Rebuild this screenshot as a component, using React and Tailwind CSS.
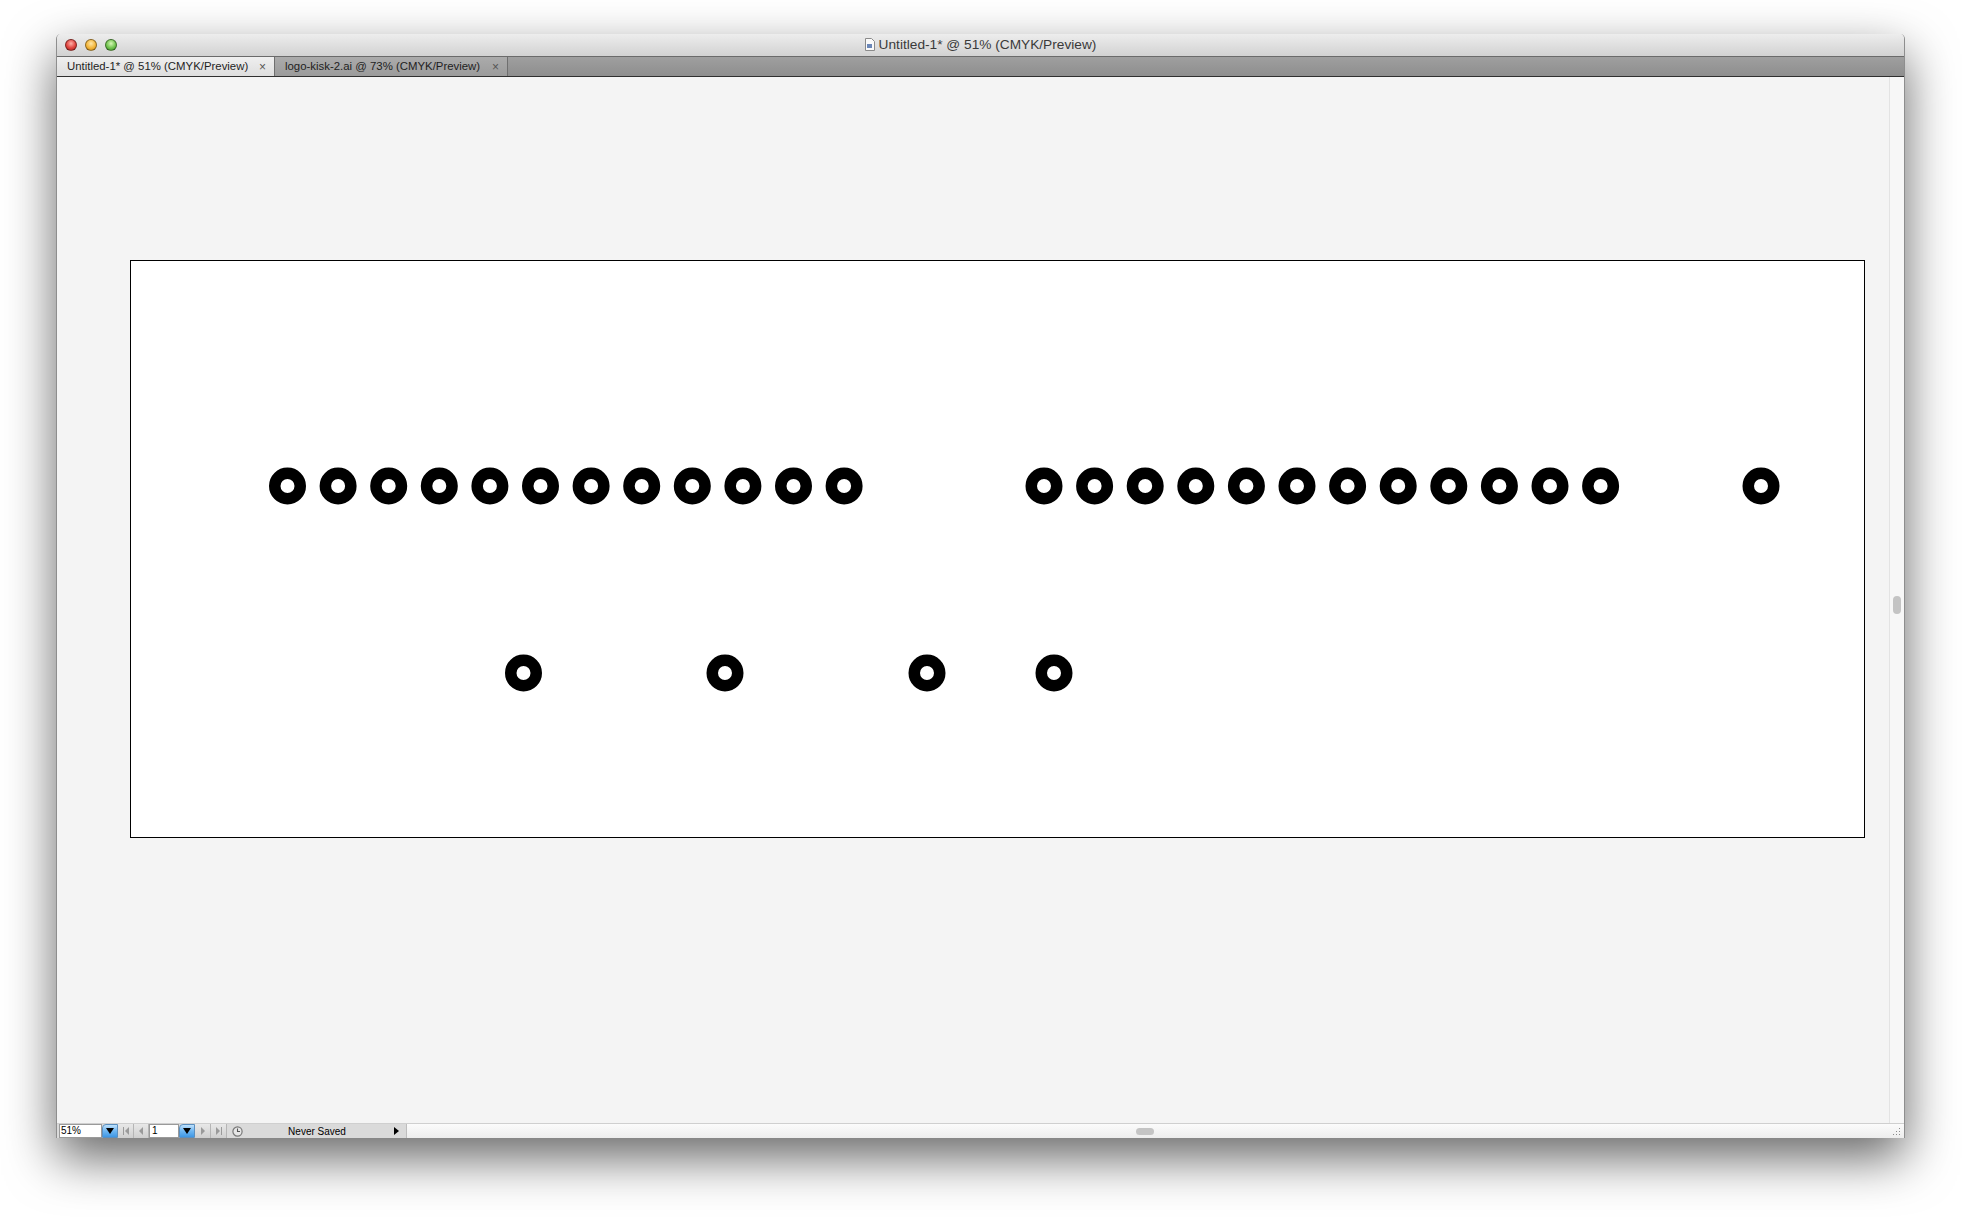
import React from 'react';

const SANS = { fontFamily: '"Liberation Sans", "DejaVu Sans", Arial, sans-serif' };

// dot centres, in artboard coordinates
const topRow = [
  ...Array.from({ length: 12 }, (_, i) => 156.5 + i * 50.6),
  ...Array.from({ length: 12 }, (_, i) => 913 + i * 50.6),
  1630,
];
const bottomRow = [392.5, 594, 796, 923];

const Ring = ({ cx, cy }) => (
  <circle cx={cx} cy={cy} r="12.75" fill="#fff" stroke="#000" strokeWidth="11.5" />
);

const Light = ({ className }) => (
  <div className={`w-[12px] h-[12px] rounded-full border border-black/40 ${className}`} />
);

const Tab = ({ label, active }) => (
  <div
    className={`flex items-center h-full pl-[10px] pr-[8px] border-r border-[#6f6f6f] ${
      active ? 'bg-gradient-to-b from-[#efefef] to-[#dedede] w-[218px]' : 'bg-gradient-to-b from-[#ababab] to-[#9b9b9b] w-[233px]'
    }`}
  >
    <span className="text-[11.4px] text-[#1e1e1e] whitespace-nowrap flex-1">{label}</span>
    <span className="text-[12px] text-[#555] leading-none">×</span>
  </div>
);

const BlueDrop = () => (
  <div className="w-[16px] h-full flex items-center justify-center rounded-tl-[4px] bg-gradient-to-b from-[#bfe1fb] via-[#6db6f2] to-[#3e97e4] border border-[#5b8fbf]">
    <svg width="8" height="6" viewBox="0 0 8 6"><path d="M0 0h8L4 6z" fill="#000" /></svg>
  </div>
);

const NavBtn = ({ children, w = 'w-[16px]' }) => (
  <div className={`${w} h-full flex items-center justify-center bg-gradient-to-b from-[#e8e8e8] to-[#cfcfcf] border-r border-[#b5b5b5]`}>
    {children}
  </div>
);

const StatusBar = () => (
  <div className="h-[15px] flex border-t border-[#cfcfcf] bg-gradient-to-b from-[#fbfbfb] to-[#ededed]">
    <div className="flex h-full pl-[2px] bg-[#dadada] w-[350px] shrink-0">
      <div className="w-[43px] h-full bg-white border border-[#9a9a9a] text-[10px] leading-[12px] pl-[1px] text-black">51%</div>
      <BlueDrop />
      <NavBtn>
        <svg width="8" height="8" viewBox="0 0 8 8"><path d="M1 0h1v8H1zM7 0v8L3 4z" fill="#9a9a9a" /></svg>
      </NavBtn>
      <NavBtn w="w-[15px]">
        <svg width="6" height="8" viewBox="0 0 6 8"><path d="M5 0v8L1 4z" fill="#9a9a9a" /></svg>
      </NavBtn>
      <div className="w-[30px] h-full bg-white border border-[#9a9a9a] text-[10px] leading-[12px] pl-[2px] text-black">1</div>
      <BlueDrop />
      <NavBtn>
        <svg width="6" height="8" viewBox="0 0 6 8"><path d="M1 0v8l4-4z" fill="#9a9a9a" /></svg>
      </NavBtn>
      <NavBtn>
        <svg width="8" height="8" viewBox="0 0 8 8"><path d="M1 0v8l4-4zM6 0h1v8H6z" fill="#9a9a9a" /></svg>
      </NavBtn>
      <div className="w-[20px] h-full flex items-center justify-center">
        <svg width="11" height="11" viewBox="0 0 11 11">
          <circle cx="5.5" cy="5.5" r="4.6" fill="#e6e6e6" stroke="#777" strokeWidth="1.2" />
          <path d="M5.5 2.5v3h2.5" fill="none" stroke="#555" strokeWidth="1.1" />
        </svg>
      </div>
      <div className="flex-1 flex items-center justify-center text-[10px] text-black">Never Saved</div>
      <div className="w-[20px] h-full flex items-center justify-center border-r border-[#bdbdbd]">
        <svg width="5" height="8" viewBox="0 0 5 8"><path d="M0 0v8l5-4z" fill="#000" /></svg>
      </div>
    </div>
    <div className="flex-1 flex items-center pl-[729px]">
      <div className="w-[18px] h-[7px] rounded-full bg-[#c4c4c4]" />
    </div>
    <div className="w-[15px] h-full flex items-end justify-center pb-[2px]">
      <svg width="9" height="9" viewBox="0 0 9 9" fill="#8a8a8a">
        <rect x="7" y="1" width="1" height="1" /><rect x="7" y="4" width="1" height="1" /><rect x="7" y="7" width="1" height="1" />
        <rect x="4" y="4" width="1" height="1" /><rect x="4" y="7" width="1" height="1" /><rect x="1" y="7" width="1" height="1" />
      </svg>
    </div>
  </div>
);

export default function App() {
  return (
    <div className="min-h-screen bg-white pt-[34px] pl-[56px]" style={SANS}>
      <div className="w-[1849px] h-[1104px] flex flex-col rounded-t-[5px] shadow-[0_20px_50px_rgba(0,0,0,0.6)] border-x border-[#8e8e8e] overflow-hidden bg-[#f4f4f4]">
        {/* title bar */}
        <div className="h-[23px] shrink-0 flex items-center relative bg-gradient-to-b from-[#ededed] to-[#d2d2d2] border-b border-[#6a6a6a]">
          <div className="flex items-center gap-[8px] pl-[8px]">
            <Light className="bg-[radial-gradient(circle_at_50%_35%,#ffb0a8,#e0443e_55%,#a8221d)]" />
            <Light className="bg-[radial-gradient(circle_at_50%_35%,#ffe7a8,#f3b63a_55%,#c8861a)]" />
            <Light className="bg-[radial-gradient(circle_at_50%_35%,#d6f7b6,#71c44e_55%,#3f8f2a)]" />
          </div>
          <div className="flex-1 flex items-center justify-center gap-[4px] pr-[60px]">
            <svg width="10" height="13" viewBox="0 0 10 13">
              <path d="M0.5 0.5h6l3 3v9h-9z" fill="#fafafa" stroke="#8a8a8a" />
              <rect x="2" y="6" width="5" height="4" fill="#6b87b8" />
            </svg>
            <span className="text-[13.7px] text-[#3a3a3a]">Untitled-1* @ 51% (CMYK/Preview)</span>
          </div>
        </div>

        {/* tab bar */}
        <div className="h-[20px] shrink-0 flex bg-gradient-to-b from-[#9f9f9f] to-[#8e8e8e] border-b border-[#2f2f2f]">
          <Tab label="Untitled-1* @ 51% (CMYK/Preview)" active />
          <Tab label="logo-kisk-2.ai @ 73% (CMYK/Preview)" />
        </div>

        {/* canvas + vertical scrollbar */}
        <div className="flex-1 flex min-h-0">
          <div className="flex-1 bg-[#f4f4f4] pl-[73px] pt-[183px]">
            <div className="w-[1735px] h-[578px] bg-white border border-black">
              <svg width="1733" height="576" viewBox="0 0 1733 576">
                {topRow.map((x) => (
                  <Ring key={x} cx={x} cy={225} />
                ))}
                {bottomRow.map((x) => (
                  <Ring key={x} cx={x} cy={412} />
                ))}
              </svg>
            </div>
          </div>
          <div className="w-[15px] shrink-0 bg-[#f7f7f7] border-l border-[#e3e3e3] pt-[519px] flex justify-center">
            <div className="w-[8px] h-[18px] rounded-full bg-[#c4c4c4]" />
          </div>
        </div>

        <StatusBar />
      </div>
    </div>
  );
}
